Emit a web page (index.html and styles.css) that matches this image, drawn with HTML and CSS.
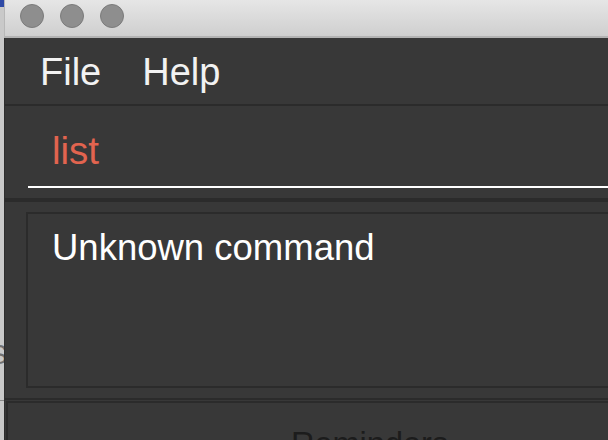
FILE: index.html
```html
<!DOCTYPE html>
<html>
<head>
<meta charset="utf-8">
<link rel="stylesheet" href="styles.css">
</head>
<body>
<div class="screen">
  <div class="desk">
    <div class="desk-blue"></div>
    <div class="desk-s">S</div>
    <div class="desk-line"></div>
  </div>
  <div class="window">
    <div class="titlebar">
      <span class="light"></span>
      <span class="light"></span>
      <span class="light"></span>
    </div>
    <div class="content">
      <div class="menubar">
        <span class="menu-item">File</span>
        <span class="menu-item">Help</span>
      </div>
      <div class="command">
        <div class="command-field">list</div>
      </div>
      <div class="result-area">
        <div class="result-box">Unknown command</div>
      </div>
      <div class="lower">
        <div class="tab-label">Reminders</div>
      </div>
    </div>
  </div>
</div>
</body>
</html>
```

FILE: styles.css
```css
html, body {
  margin: 0;
  padding: 0;
}
body {
  width: 608px;
  height: 440px;
  overflow: hidden;
  background: #c8c8c8;
  font-family: "Liberation Sans", Arial, sans-serif;
}
.screen {
  display: flex;
  width: 608px;
  height: 440px;
  overflow: hidden;
}
.desk {
  width: 4px;
  flex: none;
  display: flex;
  flex-direction: column;
  overflow: hidden;
  background: #c9c9c9;
}
.desk-blue {
  height: 7px;
  background: #2f4aa6;
  flex: none;
}
.desk-s {
  margin-top: 332px;
  margin-left: -11px;
  font-size: 28px;
  line-height: 32px;
  height: 32px;
  color: #707070;
  flex: none;
}
.desk-line {
  margin-top: 29px;
  height: 1px;
  background: #8a8a8a;
  flex: none;
}
.window {
  flex: 1;
  min-width: 0;
  display: flex;
  flex-direction: column;
  overflow: hidden;
}
.titlebar {
  height: 38px;
  flex: none;
  box-sizing: border-box;
  display: flex;
  align-items: flex-start;
  gap: 16px;
  padding: 4px 0 0 15px;
  background: linear-gradient(#e6e6e6, #cfcfcf);
  border-bottom: 2px solid #b3b3b3;
  border-left: 1px solid #b8b8b8;
}
.light {
  width: 24px;
  height: 24px;
  box-sizing: border-box;
  border-radius: 50%;
  background: #8e8e8e;
  border: 1px solid #7b7b7b;
}
.content {
  flex: 1;
  display: flex;
  flex-direction: column;
  background: #383838;
  border-left: 1px solid #2e2e2e;
  color: #fff;
}
.menubar {
  display: flex;
  gap: 41px;
  height: 68px;
  box-sizing: border-box;
  padding: 12px 0 0 35px;
  border-bottom: 2px solid #2b2b2b;
  font-size: 38px;
  line-height: 44px;
  color: #f2f2f2;
  flex: none;
}
.command {
  height: 96px;
  box-sizing: border-box;
  padding: 23px 0 0 23px;
  border-bottom: 4px solid #2b2b2b;
  flex: none;
}
.command-field {
  font-size: 38.5px;
  line-height: 44px;
  color: #e2644f;
  padding: 0 0 13px 24px;
  border-bottom: 2px solid #ffffff;
}
.result-area {
  height: 198px;
  box-sizing: border-box;
  padding: 10px 0 10px 21px;
  border-bottom: 2px solid #2b2b2b;
  flex: none;
}
.result-box {
  height: 176px;
  box-sizing: border-box;
  border: 2px solid #2b2b2b;
  border-right: none;
  padding: 13px 0 0 24px;
  font-size: 36.5px;
  line-height: 42px;
  color: #ffffff;
}
.lower {
  flex: 1;
  margin: 1px 0 0 1px;
  border-top: 2px solid #2b2b2b;
  border-left: 2px solid #2b2b2b;
  padding: 23px 0 0 283px;
}
.tab-label {
  font-size: 32.5px;
  line-height: 37px;
  color: #1c1c1c;
}
```
